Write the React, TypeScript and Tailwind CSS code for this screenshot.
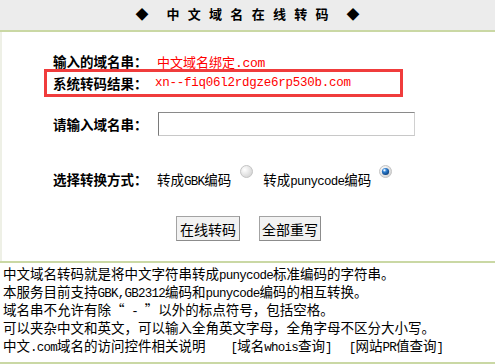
import React from 'react';

// ASCII runs sit in a narrow monospace, like the old SimSun half-width glyphs
const A: React.FC<{ children: React.ReactNode; size?: string }> = ({
  children,
  size = 'text-[12.5px] tracking-[-0.75px]',
}) => <span className={`[font-family:'Liberation_Mono',monospace] leading-none ${size}`}>{children}</span>;

const Radio: React.FC<{ checked?: boolean }> = ({ checked }) => (
  <svg width="13" height="13" viewBox="0 0 13 13" className="self-start shrink-0">
    <defs>
      <radialGradient id={checked ? 'rOn' : 'rOff'} cx="0.35" cy="0.35" r="0.7">
        <stop offset="0" stopColor="#ffffff" />
        <stop offset="1" stopColor="#d4d4d4" />
      </radialGradient>
      <radialGradient id="dot" cx="0.38" cy="0.32" r="0.7">
        <stop offset="0" stopColor="#9fd0ff" />
        <stop offset="0.45" stopColor="#2a78c8" />
        <stop offset="1" stopColor="#0b3f7c" />
      </radialGradient>
    </defs>
    <circle cx="6.5" cy="6.5" r="6" fill={`url(#${checked ? 'rOn' : 'rOff'})`} stroke="#c4c4c4" strokeWidth="1" />
    {checked && (
      <>
        <circle cx="6.5" cy="6.5" r="3.6" fill="url(#dot)" />
        <circle cx="5.4" cy="5.2" r="1" fill="#ffffff" opacity="0.85" />
      </>
    )}
  </svg>
);

const Line: React.FC<{ children: React.ReactNode; className?: string }> = ({ children, className = '' }) => (
  <div className={`h-[18px] leading-[18px] whitespace-nowrap ${className}`}>{children}</div>
);

const App: React.FC = () => {
  const title = ['中', '文', '域', '名', '在', '线', '转', '码'];

  return (
    <div lang="zh-CN" className="w-[495px] h-[364px] overflow-hidden bg-white text-black [font-family:'Noto_Sans_CJK_SC',sans-serif]">
      {/* header */}
      <div className="h-[32px] bg-[#ececec] border-b-2 border-[#cad8a4] flex items-center justify-center pb-[3px] text-[13px] font-bold">
        <span className="text-[13px] leading-none">◆</span>
        <div className="flex gap-[8.3px] mx-[18px]">
          {title.map((c) => (
            <span key={c}>{c}</span>
          ))}
        </div>
        <span className="text-[13px] leading-none">◆</span>
      </div>

      {/* form */}
      <div className="h-[229px] border-l-2 border-[#eef0e6] pt-[22px] text-[13.5px]">
        <div className="flex h-[15px] items-center pl-[51px] leading-[15px]">
          <span className="w-[104px] font-bold">输入的域名串：</span>
          <span className="text-[#ff0000] text-[13px]">
            中文域名绑定<A size="text-[13px] tracking-[-0.3px]">.com</A>
          </span>
        </div>

        <div className="ml-[42px] w-[359px] h-[28px] border-[3px] border-[#f03c3c] flex items-center pl-[6px]">
          <span className="w-[102px] font-bold">系统转码结果：</span>
          <A size="text-[12.5px] tracking-[-0.25px] text-[#ff0000]">xn--fiq06l2rdgze6rp530b.com</A>
        </div>

        <div className="mt-[15px] flex h-[24px] items-center pl-[51px]">
          <span className="w-[105px] font-bold">请输入域名串：</span>
          <input
            type="text"
            className="w-[257px] h-[24px] bg-white border border-t-[#8a8a8a] border-l-[#7a7a7a] border-r-[#d0d0d0] border-b-[#c8c8c8] outline-none"
          />
        </div>

        <div className="mt-[29px] flex h-[23px] pl-[51px]">
          <span className="self-end w-[104px] leading-[18px] font-bold">选择转换方式：</span>
          <span className="self-end h-[18px] leading-[18px] mr-[9px]">
            转成<A>GBK</A>编码
          </span>
          <Radio />
          <span className="self-end h-[18px] leading-[18px] ml-[10px] mr-[8px]">
            转成<A>punycode</A>编码
          </span>
          <Radio checked />
        </div>

        <div className="mt-[28px] flex justify-center gap-[19px]">
          <button className="w-[64px] h-[25px] bg-[#f2f2f2] border border-[#a3a3a3] border-r-[#8c8c8c] border-b-[#8c8c8c] text-[14px] leading-none">
            在线转码
          </button>
          <button className="w-[62px] h-[25px] bg-[#f2f2f2] border border-[#a3a3a3] border-r-[#8c8c8c] border-b-[#8c8c8c] text-[14px] leading-none">
            全部重写
          </button>
        </div>
      </div>

      {/* notes */}
      <div className="border-t-2 border-b-2 border-[#cad8a4] pt-[1px] pb-[8px] pl-[3px] text-[13.5px]">
        <Line>
          中文域名转码就是将中文字符串转成<A>punycode</A>标准编码的字符串。
        </Line>
        <Line>
          本服务目前支持<A>GBK,GB2312</A>编码和<A>punycode</A>编码的相互转换。
        </Line>
        <Line>
          域名串不允许有除<span className="inline-block w-[13.5px] text-right">“</span>
          <A>{'\u00a0-\u00a0'}</A>
          <span className="inline-block w-[13.5px] text-left">”</span>以外的标点符号，包括空格。
        </Line>
        <Line>可以夹杂中文和英文，可以输入全角英文字母，全角字母不区分大小写。</Line>
        <Line className="flex">
          <span>
            中文<A>.com</A>域名的访问控件相关说明
          </span>
          <span className="ml-[25px]">
            <A>[</A>域名<A>whois</A>查询<A>]</A>
          </span>
          <span className="ml-[17px]">
            <A>[</A>网站<A>PR</A>值查询<A>]</A>
          </span>
        </Line>
      </div>
    </div>
  );
};

export default App;
